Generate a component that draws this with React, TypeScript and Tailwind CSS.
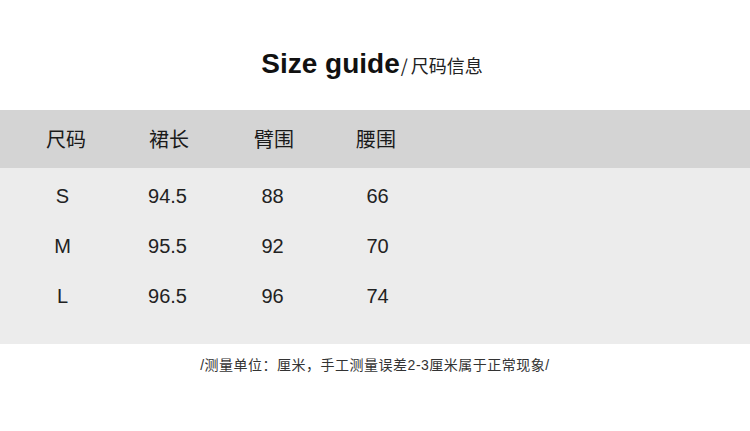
import React from "react";

const rows = [
  ["S", "94.5", "88", "66"],
  ["M", "95.5", "92", "70"],
  ["L", "96.5", "96", "74"],
];
const heads = ["尺码", "裙长", "臂围", "腰围"];

export default function App() {
  return (
    <div className="w-[750px] h-[431px] bg-white overflow-hidden">
      <div className="h-[110px] flex justify-center items-start pt-[50px]">
        <div className="flex items-baseline text-[#111] mr-[6px]">
          <span className="text-[28px] font-bold leading-none font-['Liberation_Sans',sans-serif]">Size guide</span>
          <span className="text-[18px] leading-none text-[#222] font-['Noto_Sans_CJK_SC',sans-serif] ml-[1px]">/</span>
          <span className="text-[18px] leading-none text-[#222] font-['Noto_Sans_CJK_SC',sans-serif] ml-[3px]">尺码信息</span>
        </div>
      </div>
      <div className="h-[58px] bg-[#d4d4d4] grid grid-cols-[repeat(4,105px)] pl-[10px] items-center text-[20px] text-[#1a1a1a] font-['Noto_Sans_CJK_SC',sans-serif]">
        {heads.map((h, i) => (
          <div key={h} className={"text-center leading-none " + (i === 0 ? "pl-[7px]" : i === 3 ? "pr-[3px]" : "pl-[3px]")}>
            {h}
          </div>
        ))}
      </div>
      <div className="h-[176px] bg-[#ececec] pt-[3px] font-['Liberation_Sans',sans-serif] text-[20px] text-[#222]">
        {rows.map((r) => (
          <div key={r[0]} className="h-[50px] grid grid-cols-[repeat(4,105px)] pl-[10px] items-center">
            {r.map((c, j) => (
              <div key={j} className="text-center leading-none">{c}</div>
            ))}
          </div>
        ))}
      </div>
      <div className="h-[42px] flex items-center justify-center text-[14px] text-[#333] font-['Liberation_Sans','Noto_Sans_CJK_SC',sans-serif] tracking-[0.5px]">
        /测量单位：厘米，手工测量误差2-3厘米属于正常现象/
      </div>
    </div>
  );
}
